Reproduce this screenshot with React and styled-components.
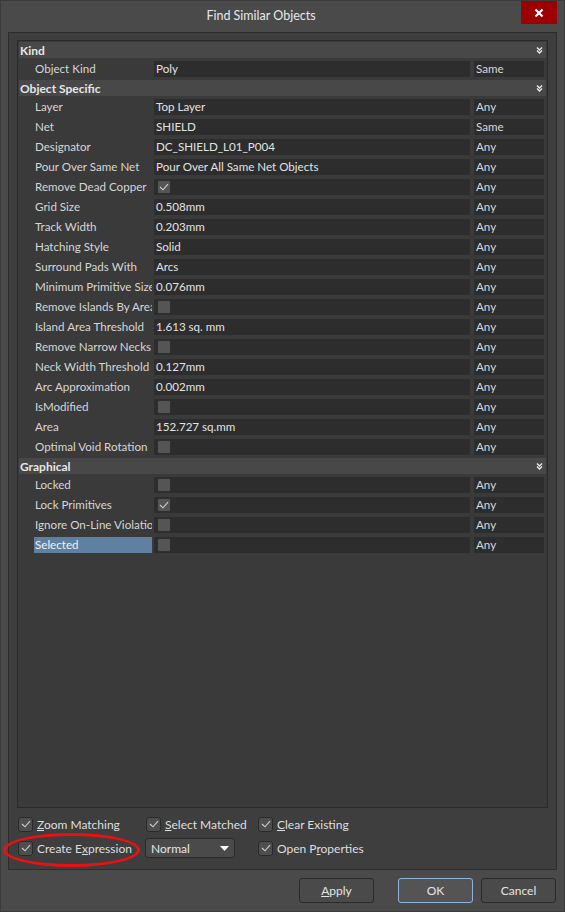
import React from "react";
import styled, { createGlobalStyle } from "styled-components";

const GlobalStyle = createGlobalStyle`
  html, body {
    margin: 0;
    padding: 0;
    background: #4a4a4a;
  }
  * {
    box-sizing: border-box;
  }
`;

const sections = [
  {
    title: "Kind",
    rows: [{ label: "Object Kind", value: "Poly", type: "Same" }],
  },
  {
    title: "Object Specific",
    rows: [
      { label: "Layer", value: "Top Layer", type: "Any" },
      { label: "Net", value: "SHIELD", type: "Same" },
      { label: "Designator", value: "DC_SHIELD_L01_P004", type: "Any" },
      { label: "Pour Over Same Net", value: "Pour Over All Same Net Objects", type: "Any" },
      { label: "Remove Dead Copper", check: true, type: "Any" },
      { label: "Grid Size", value: "0.508mm", type: "Any" },
      { label: "Track Width", value: "0.203mm", type: "Any" },
      { label: "Hatching Style", value: "Solid", type: "Any" },
      { label: "Surround Pads With", value: "Arcs", type: "Any" },
      { label: "Minimum Primitive Size", value: "0.076mm", type: "Any" },
      { label: "Remove Islands By Area", check: false, type: "Any" },
      { label: "Island Area Threshold", value: "1.613 sq. mm", type: "Any" },
      { label: "Remove Narrow Necks", check: false, type: "Any" },
      { label: "Neck Width Threshold", value: "0.127mm", type: "Any" },
      { label: "Arc Approximation", value: "0.002mm", type: "Any" },
      { label: "IsModified", check: false, type: "Any" },
      { label: "Area", value: "152.727 sq.mm", type: "Any" },
      { label: "Optimal Void Rotation", check: false, type: "Any" },
    ],
  },
  {
    title: "Graphical",
    rows: [
      { label: "Locked", check: false, type: "Any" },
      { label: "Lock Primitives", check: true, type: "Any" },
      { label: "Ignore On-Line Violations", check: false, type: "Any" },
      { label: "Selected", check: false, type: "Any", selected: true },
    ],
  },
];

const Window = styled.div`
  position: relative;
  width: 565px;
  height: 912px;
  background: #4a4a4a;
  border: 1px solid #3b3b3b;
  display: flex;
  flex-direction: column;
  font-family: Lato, "Open Sans", sans-serif;
  font-size: 11.6px;
  color: #dcdcdc;
`;

const TitleBar = styled.div`
  height: 31px;
  display: flex;
  align-items: flex-start;
  padding-right: 7px;
`;

const Title = styled.div`
  flex: 1;
  text-align: center;
  line-height: 30px;
  font-size: 12.5px;
  color: #e8e8e8;
`;

const CloseButton = styled.div`
  width: 36px;
  height: 23px;
  background: #9d0000;
  display: flex;
  align-items: center;
  justify-content: center;
`;

const Panel = styled.div`
  margin: 0 7px;
  height: 838px;
  background: #3e3e3e;
  border: 1px solid #2c2c2c;
  padding: 7px 8px 0 8px;
  display: flex;
  flex-direction: column;
`;

const Grid = styled.div`
  height: 768px;
  background: #3a3a3a;
  border: 1px solid #2a2a2a;
  padding: 0 1px;
  overflow: hidden;
`;

const HeaderRow = styled.div`
  height: 18px;
  padding: 1px 0;
`;

const HeaderBand = styled.div`
  height: 100%;
  background: #484848;
  display: flex;
  align-items: center;
  justify-content: space-between;
  padding: 0 3px 0 1px;
  font-weight: 700;
  font-size: 12px;
  color: #e6e6e6;
`;

const Row = styled.div`
  height: 20px;
  padding: 2px 2px 2px 0;
  display: flex;
`;

const LabelCell = styled.div`
  width: 133px;
  padding-left: 15px;
  display: flex;
`;

const LabelText = styled.div`
  flex: 1;
  padding-left: 1px;
  white-space: nowrap;
  overflow: hidden;
  line-height: 16px;
  color: ${(p) => (p.$selected ? "#f2f2f2" : "#d6d6d6")};
  background: ${(p) => (p.$selected ? "#5f80a0" : "transparent")};
`;

const ValueCell = styled.div`
  flex: 1;
  margin-left: 2px;
  background: #2d2d2d;
  padding-left: 2px;
  line-height: 16px;
  white-space: nowrap;
  overflow: hidden;
  color: #e2e2e2;
  display: flex;
  align-items: center;
`;

const TypeCell = styled.div`
  width: 70px;
  margin-left: 4px;
  background: #2d2d2d;
  padding-left: 2px;
  line-height: 16px;
  color: #d8d8d8;
`;

const GridCheck = styled.div`
  width: 14px;
  height: 14px;
  margin-left: 1px;
  border-radius: 2px;
  background: #555555;
  border: 1px solid #2f2f2f;
  display: flex;
  align-items: center;
  justify-content: center;
`;

const Options = styled.div`
  display: grid;
  grid-template-columns: 128px 112px auto;
  grid-auto-rows: 24px;
  padding: 4px 0 0 1px;
  align-items: center;
`;

const Option = styled.label`
  display: flex;
  align-items: center;
  gap: 4px;
  color: #dedede;
  white-space: nowrap;
  font-size: 12px;
`;

const Box = styled.span`
  width: 15px;
  height: 15px;
  border-radius: 3px;
  background: #4e4e4e;
  border: 1px solid #2a2a2a;
  display: flex;
  align-items: center;
  justify-content: center;
`;

const Select = styled.div`
  width: 90px;
  height: 20px;
  margin-left: -1px;
  border-radius: 3px;
  background: #4a4a4a;
  border: 1px solid #2a2a2a;
  display: flex;
  align-items: center;
  justify-content: space-between;
  padding: 0 5px 0 5px;
  font-size: 12px;
  color: #e6e6e6;
`;

const Footer = styled.div`
  display: flex;
  justify-content: flex-end;
  padding: 8px 8px 0 0;
`;

const Button = styled.div`
  width: 75px;
  height: 25px;
  margin-left: ${(p) => p.$gap}px;
  border-radius: 3px;
  background: ${(p) => (p.$primary ? "#545454" : "#4a4a4a")};
  border: 1px solid ${(p) => (p.$primary ? "#8fb4dc" : "#2a2a2a")};
  display: flex;
  align-items: center;
  justify-content: center;
  font-size: 12px;
  color: #e4e4e4;
`;

const Ellipse = styled.div`
  position: absolute;
  left: 2px;
  top: 832px;
  width: 137px;
  height: 34px;
  border: 3px solid #ec1010;
  border-radius: 50%;
  pointer-events: none;
`;

const Chevrons = () => (
  <svg width="7" height="7" viewBox="0 0 7 7">
    <path d="M1 0.5 L3.5 3 L6 0.5 M1 3.5 L3.5 6 L6 3.5" stroke="#eeeeee" strokeWidth="1.3" fill="none" />
  </svg>
);

const Tick = ({ color = "#cfcfcf" }) => (
  <svg width="10" height="8" viewBox="0 0 10 8">
    <path d="M1 4 L4 6.8 L9 1.2" stroke={color} strokeWidth="1.1" fill="none" />
  </svg>
);

const CheckOption = ({ children }) => (
  <Option>
    <Box>
      <Tick />
    </Box>
    <span>{children}</span>
  </Option>
);

const App = () => {
  return (
    <>
      <GlobalStyle />
      <Window>
        <TitleBar>
          <Title>Find Similar Objects</Title>
          <CloseButton>
            <svg width="10" height="10" viewBox="0 0 10 10">
              <path d="M1.5 1.5 L8.5 8.5 M8.5 1.5 L1.5 8.5" stroke="#ffffff" strokeWidth="2.2" />
            </svg>
          </CloseButton>
        </TitleBar>
        <Panel>
          <Grid>
            {sections.map((section) => (
              <React.Fragment key={section.title}>
                <HeaderRow>
                  <HeaderBand>
                    <span>{section.title}</span>
                    <Chevrons />
                  </HeaderBand>
                </HeaderRow>
                {section.rows.map((row) => (
                  <Row key={row.label}>
                    <LabelCell>
                      <LabelText $selected={row.selected}>{row.label}</LabelText>
                    </LabelCell>
                    <ValueCell>
                      {row.check === undefined ? (
                        row.value
                      ) : (
                        <GridCheck>{row.check && <Tick />}</GridCheck>
                      )}
                    </ValueCell>
                    <TypeCell>{row.type}</TypeCell>
                  </Row>
                ))}
              </React.Fragment>
            ))}
          </Grid>
          <Options>
            <CheckOption>
              <u>Z</u>oom Matching
            </CheckOption>
            <CheckOption>
              <u>S</u>elect Matched
            </CheckOption>
            <CheckOption>
              <u>C</u>lear Existing
            </CheckOption>
            <CheckOption>
              Create E<u>x</u>pression
            </CheckOption>
            <Select>
              <span>Normal</span>
              <svg width="9" height="5" viewBox="0 0 9 5">
                <path d="M0 0 L9 0 L4.5 5 Z" fill="#ffffff" />
              </svg>
            </Select>
            <CheckOption>
              Open P<u>r</u>operties
            </CheckOption>
          </Options>
        </Panel>
        <Footer>
          <Button $gap={0}>
            <span>
              <u>A</u>pply
            </span>
          </Button>
          <Button $gap={24} $primary>
            OK
          </Button>
          <Button $gap={8}>Cancel</Button>
        </Footer>
        <Ellipse />
      </Window>
    </>
  );
};

export default App;
